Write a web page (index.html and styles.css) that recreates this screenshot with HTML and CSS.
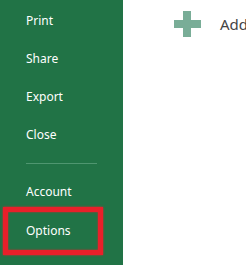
FILE: index.html
```html
<!DOCTYPE html>
<html lang="en">
<head>
    <meta charset="UTF-8">
    <title>Options</title>
    <link rel="stylesheet" href="styles.css">
</head>
<body>
<div id="backstage">
    <ul id="nav">
        <li>Print</li>
        <li>Share</li>
        <li>Export</li>
        <li>Close</li>
        <li class="divider"></li>
        <li>Account</li>
        <li class="marked">Options</li>
    </ul>
    <div id="content">
        <div class="add">
            <svg class="plus" width="27" height="26" viewBox="0 0 27 26">
                <rect x="9" y="0" width="8" height="26" fill="#79ad97"/>
                <rect x="0" y="9" width="27" height="8" fill="#79ad97"/>
            </svg>
            <span>Add</span>
        </div>
    </div>
</div>
</body>
</html>
```

FILE: styles.css
```css
* {
    margin: 0;
    padding: 0;
}

ul, ol {
    list-style: none;
}

body {
    font-family: "Noto Sans", "Open Sans", sans-serif;
    background: #fff;
}

#backstage {
    display: flex;
    width: 246px;
    height: 265px;
    overflow: hidden;
}

#nav {
    width: 123px;
    flex-shrink: 0;
    background: #217346;
    padding-top: 2px;
}

#nav li {
    height: 38px;
    line-height: 38px;
    padding-left: 26px;
    font-size: 12px;
    color: #ffffff;
}

#nav .divider {
    height: 1px;
    margin: 9px 26px 9px 26px;
    padding: 0;
    width: 71px;
    background: #4f9670;
}

#nav .marked {
    margin: -4px 0 0 3px;
    width: 72px;
    height: 38px;
    padding: 0 0 0 18px;
    border: 5px solid #e8202a;
    box-shadow: 0 0 2px #e8202a, inset 0 0 2px #e8202a;
}

#content {
    flex: 1;
    padding: 11px 0 0 51px;
}

.add {
    display: flex;
    align-items: center;
    gap: 19px;
    white-space: nowrap;
}

.add span {
    font-size: 15px;
    color: #444444;
}
```
